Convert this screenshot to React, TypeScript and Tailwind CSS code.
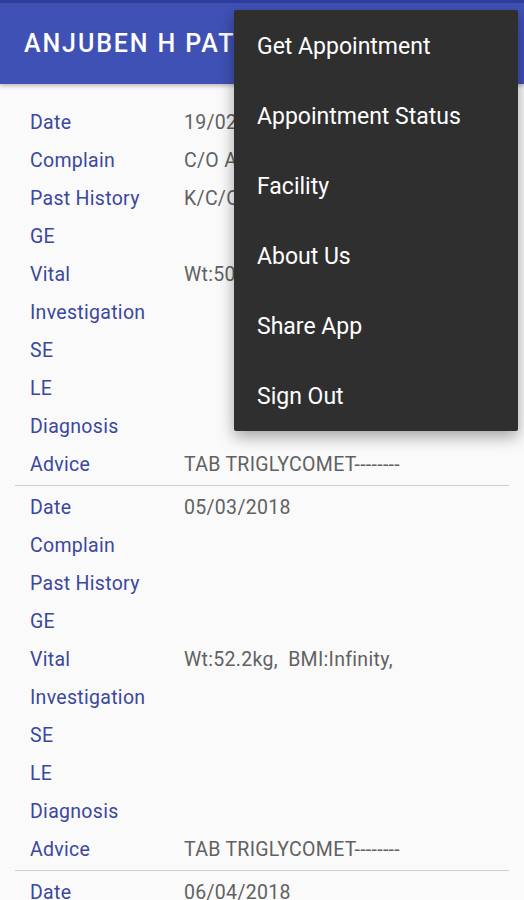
import React from "react";

type Rec = { date: string; complain: string; past: string; vital: string; advice: string };

const records: Rec[] = [
  { date: "19/02/2018", complain: "C/O ACIDITY", past: "K/C/O DM", vital: "Wt:50.2kg,  BMI:Infinity,", advice: "TAB TRIGLYCOMET--------" },
  { date: "05/03/2018", complain: "", past: "", vital: "Wt:52.2kg,  BMI:Infinity,", advice: "TAB TRIGLYCOMET--------" },
  { date: "06/04/2018", complain: "", past: "", vital: "", advice: "" },
];

const menu = ["Get Appointment", "Appointment Status", "Facility", "About Us", "Share App", "Sign Out"];

function Row({ label, value }: { label: string; value: string }) {
  return (
    <div className="flex h-[38px] items-center">
      <div className="w-[154px] shrink-0 text-[19.5px] tracking-[0.3px] text-[#3a47a0]">{label}</div>
      <div className="whitespace-pre text-[19.5px] tracking-[0.3px] text-[#616161]">{value}</div>
    </div>
  );
}

export default function App() {
  return (
    <div
      className="relative h-[900px] w-[524px] overflow-hidden bg-[#fafafa]"
      style={{ fontFamily: "Roboto, 'Noto Sans', sans-serif" }}
    >
      <div className="h-[3px] bg-[#303f9f]" />
      <div className="flex h-[81px] items-center bg-[#3f51b5] pl-[24px] shadow-[0_2px_4px_rgba(0,0,0,0.25)]">
        <span className="whitespace-nowrap text-[25px] font-medium tracking-[1.9px] text-white">ANJUBEN H PATEL</span>
      </div>
      <div className="px-[15px] pt-[20px]">
        {records.map((r, i) => (
          <div key={i}>
            <div className="pl-[15px]">
              <Row label="Date" value={r.date} />
              <Row label="Complain" value={r.complain} />
              <Row label="Past History" value={r.past} />
              <Row label="GE" value="" />
              <Row label="Vital" value={r.vital} />
              <Row label="Investigation" value="" />
              <Row label="SE" value="" />
              <Row label="LE" value="" />
              <Row label="Diagnosis" value="" />
              <Row label="Advice" value={r.advice} />
            </div>
            <div className="mt-[1px] mb-[3px] h-px bg-[#cfcfcf]" />
          </div>
        ))}
      </div>

      <div className="absolute left-[234px] top-[10px] w-[284px] rounded-[2px] bg-[#2f2f2f] pt-px shadow-[0_6px_16px_rgba(0,0,0,0.35)]">
        {menu.map((m) => (
          <div key={m} className="flex h-[70px] items-center whitespace-nowrap pl-[23px] pt-[2px] text-[23px] text-white">
            {m}
          </div>
        ))}
      </div>
    </div>
  );
}
